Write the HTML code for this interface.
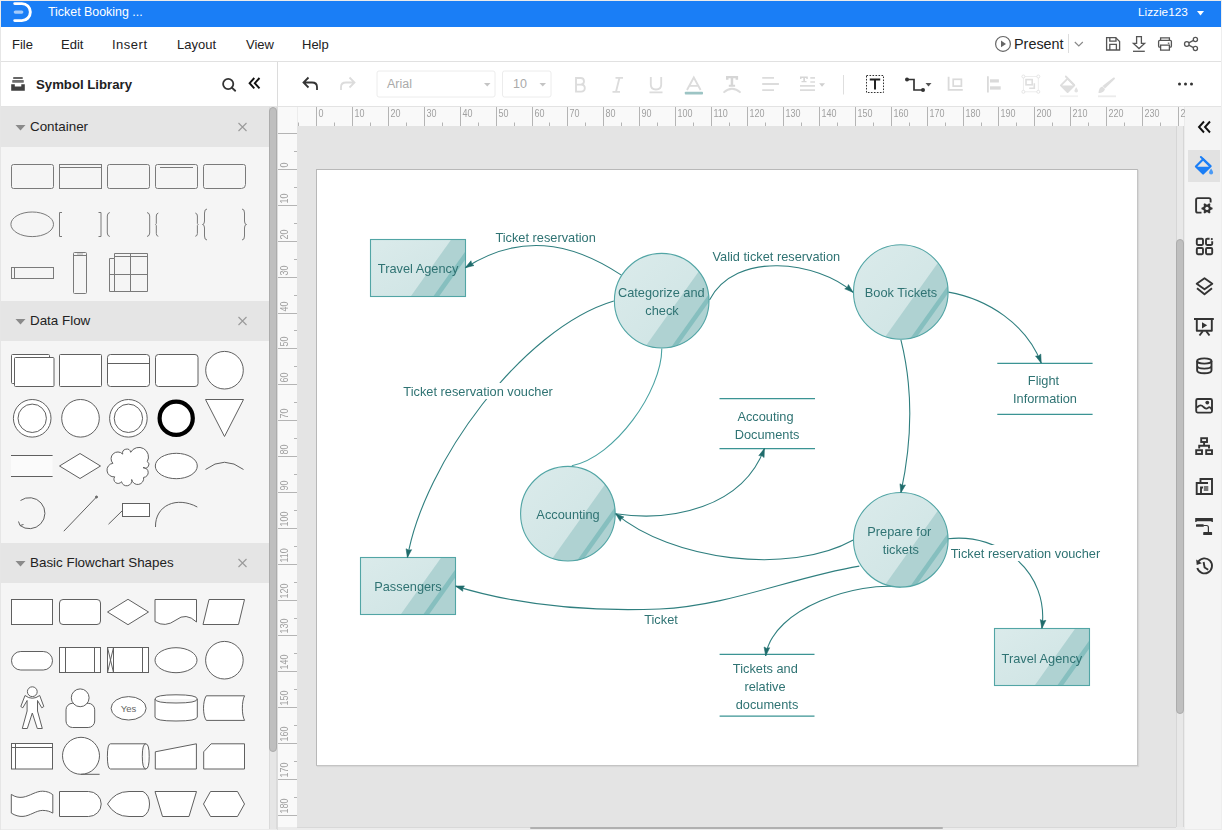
<!DOCTYPE html>
<html><head><meta charset="utf-8"><title>Ticket Booking</title>
<style>
*{margin:0;padding:0;box-sizing:border-box}
html,body{width:1222px;height:830px;overflow:hidden;background:#ebebeb;font-family:"Liberation Sans",sans-serif;position:relative}
.a{position:absolute;white-space:nowrap}
svg{position:absolute;overflow:visible}
#title{left:1px;top:1px;width:1220px;height:26px;background:#1a7ef6;color:#fff}
#menu{left:1px;top:27px;width:1220px;height:35px;background:#fff;border-bottom:1px solid #e1e1e1}
.mi{position:absolute;top:10px;font-size:13px;color:#222;line-height:16px}
#lhead{left:1px;top:62px;width:276px;height:45px;background:#fff;border-bottom:1px solid #e3e3e3}
#divl{left:277px;top:62px;width:1px;height:768px;background:#dcdcdc}
#tool{left:278px;top:62px;width:943px;height:45px;background:#fff;border-bottom:1px solid #e3e3e3}
#lib{left:1px;top:107px;width:268px;height:722px;background:#f5f5f5;overflow:hidden}
.sh{position:absolute;left:0;width:268px;height:40px;background:#e5e5e5}
.sh span{position:absolute;left:29px;top:12px;font-size:13.4px;color:#222;line-height:16px}
#canvas{left:298px;top:127px;width:878px;height:700px;background:#e4e4e4;overflow:hidden}
#rpanel{left:1185px;top:107px;width:36px;height:722px;background:#f4f4f4}
</style></head>
<body>

<div id="title" class="a">
  <svg style="left:11px;top:1px" width="24" height="24" viewBox="0 0 24 24">
    <path d="M2.7 1.6 H9.85 A8.5 8.5 0 0 1 9.85 18.6 H2.7" fill="none" stroke="#fff" stroke-width="2.9" stroke-linecap="round"/>
    <path d="M3.3 10.05 H9.8" stroke="rgba(255,255,255,0.6)" stroke-width="3.2" stroke-linecap="round"/>
  </svg>
  <div class="a" style="left:47px;top:3px;font-size:12.4px;line-height:16px">Ticket Booking ...</div>
  <div class="a" style="left:1137px;top:3px;font-size:11.8px;line-height:16px">Lizzie123</div>
  <svg style="left:1196px;top:10px" width="8" height="5"><path d="M0 0 H7 L3.5 4.5Z" fill="#fff"/></svg>
</div>
<div id="menu" class="a">
  <div class="mi" style="left:11px">File</div>
  <div class="mi" style="left:60px">Edit</div>
  <div class="mi" style="left:111px;letter-spacing:0.5px">Insert</div>
  <div class="mi" style="left:176px">Layout</div>
  <div class="mi" style="left:245px">View</div>
  <div class="mi" style="left:301px">Help</div>
  <svg style="left:993px;top:8px" width="18" height="18" viewBox="0 0 18 18">
    <circle cx="9" cy="8.9" r="7.4" fill="none" stroke="#666" stroke-width="1.2"/>
    <path d="M7 5.6 L12 8.9 L7 12.2Z" fill="#666"/>
  </svg>
  <div class="a" style="left:1013px;top:8px;font-size:14.4px;line-height:18px;color:#222">Present</div>
  <div class="a" style="left:1067px;top:7px;width:1px;height:19px;background:#ddd"></div>
  <svg style="left:1073px;top:14px" width="10" height="7"><path d="M0.8 1 L4.8 5 L8.8 1" fill="none" stroke="#888" stroke-width="1.1"/></svg>
  <svg style="left:-1px;top:-27px" width="1222" height="62" viewBox="0 0 1222 62">
  <g fill="none" stroke="#555" stroke-width="1.3">
    <path d="M1106.6 37.6 H1115.6 L1119.6 41.6 V50 H1106.6Z"/>
    <path d="M1109.8 37.6 V41.2 H1116 V37.6 M1109.8 50 V44.4 H1116.4 V50"/>
    <path d="M1136.6 36.6 H1141.4 V43.4 H1144.6 L1139 48.6 L1133.4 43.4 H1136.6Z" stroke-linejoin="miter"/>
    <path d="M1133 51.3 H1144.8"/>
    <path d="M1160.6 40.2 V37.8 H1169.4 V40.2"/>
    <path d="M1160.6 47.2 H1159.8 Q1158.6 47.2 1158.6 46 V41.6 Q1158.6 40.4 1159.8 40.4 H1170.2 Q1171.4 40.4 1171.4 41.6 V46 Q1171.4 47.2 1170.2 47.2 H1169.4"/>
    <path d="M1160.6 45.2 V50.2 H1169.4 V45.2Z"/>
    <circle cx="1186.8" cy="44" r="2.3"/>
    <circle cx="1195.4" cy="39.5" r="2.1"/>
    <circle cx="1195.4" cy="48.5" r="2.1"/>
    <path d="M1188.8 42.9 L1193.5 40.4 M1188.8 45.1 L1193.5 47.6"/>
  </g>
  <rect x="1167.8" y="42.6" width="1.6" height="1.2" fill="#555"/>
</svg>
</div>
<div id="lhead" class="a">
  <svg style="left:0;top:0" width="30" height="40" viewBox="0 0 30 40">
    <rect x="12.1" y="15.1" width="9.7" height="1.8" rx="0.4" fill="#666"/>
    <rect x="11.2" y="18.1" width="11.6" height="2.6" rx="0.4" fill="#6e6e6e"/>
    <path d="M10.2 22.2 H13.8 V24.5 H20.3 V22.2 H23.8 V28.7 H10.2Z" fill="#404040"/>
  </svg>
  <div class="a" style="left:35px;top:15px;font-size:13.2px;font-weight:bold;color:#222;line-height:16px">Symbol Library</div>
  <svg style="left:220px;top:14px" width="16" height="16" viewBox="0 0 16 16">
    <circle cx="7.2" cy="8" r="5.1" fill="none" stroke="#333" stroke-width="1.8"/>
    <path d="M10.8 11.6 L14.2 14.7" stroke="#333" stroke-width="1.9" stroke-linecap="round"/>
  </svg>
  <svg style="left:247px;top:15px" width="14" height="13" viewBox="0 0 14 13">
    <path d="M6.3 1 L1.6 6.2 L6.3 11.4 M11.5 1 L6.8 6.2 L11.5 11.4" fill="none" stroke="#111" stroke-width="1.9"/>
  </svg>
</div>
<div id="divl" class="a"></div>


<div id="lib" class="a">
  <div class="sh" style="top:0"><span>Container</span></div>
  <div class="sh" style="top:194px"><span>Data Flow</span></div>
  <div class="sh" style="top:436px"><span>Basic Flowchart Shapes</span></div>
</div>
<div class="a" style="left:269px;top:107px;width:8px;height:722px;background:#e6e6e6;border-left:1px solid #dadada;border-right:1px solid #dadada"></div>
<div class="a" style="left:269px;top:107px;width:8px;height:645px;background:#bfbfbf;border:1px solid #acacac;border-radius:4px"></div>
<svg style="left:0;top:0" width="278" height="830" viewBox="0 0 278 830">
<path d="M15.5 125 H25.5 L20.5 130.6Z" fill="#8a8a8a"/><path d="M238.5 123 L246.5 131 M246.5 123 L238.5 131" stroke="#999" stroke-width="1.1"/>
<path d="M15.5 319 H25.5 L20.5 324.6Z" fill="#8a8a8a"/><path d="M238.5 317 L246.5 325 M246.5 317 L238.5 325" stroke="#999" stroke-width="1.1"/>
<path d="M15.5 561 H25.5 L20.5 566.6Z" fill="#8a8a8a"/><path d="M238.5 559 L246.5 567 M246.5 559 L238.5 567" stroke="#999" stroke-width="1.1"/>
<g fill="none" stroke="#7a7a7a" stroke-width="1">
<rect x="11.5" y="164.5" width="42" height="24" rx="2"/>
<rect x="59.5" y="164.5" width="42" height="24"/><path d="M59.5 167.5 H101.5"/>
<rect x="107.5" y="164.5" width="42" height="24" rx="2"/>
<rect x="155.5" y="164.5" width="42" height="24" rx="2"/><path d="M160 167.5 H193"/>
<path d="M205.5 164.5 H243.5 Q245.5 164.5 245.5 166.5 V184.5 Q245.5 188.5 241.5 188.5 H205.5 Q203.5 188.5 203.5 186.5 V166.5 Q203.5 164.5 205.5 164.5Z"/>
<ellipse cx="32.2" cy="224.3" rx="21.3" ry="12.3"/>
<path d="M62 212.5 H59.5 V236.5 H62 M98.5 212.5 H101 V236.5 H98.5"/>
<path d="M109.8 212.5 Q107.3 213 107.3 216 V233 Q107.3 236 109.8 236.5 M147 212.5 Q149.7 213 149.7 216 V233 Q149.7 236 147 236.5"/>
<path d="M158.3 213 Q156.3 213.5 156.3 216 V223.5 L155.6 224.5 L156.3 225.5 V233.5 Q156.3 236 158.3 236.3 M195.3 213 Q197.4 213.5 197.4 216 V223.5 L198.1 224.5 L197.4 225.5 V233.5 Q197.4 236 195.3 236.3"/>
<path d="M207 209 Q204.5 209 204.5 213 V221 Q204.5 224.5 202.5 224.5 Q204.5 224.5 204.5 228 V236 Q204.5 240 207 240"/>
<path d="M242 209 Q244.5 209 244.5 213 V221 Q244.5 224.5 246.5 224.5 Q244.5 224.5 244.5 228 V236 Q244.5 240 242 240"/>
<rect x="11.5" y="267.5" width="42" height="11"/><path d="M14.5 267.5 V278.5"/>
<rect x="73.5" y="252.5" width="13" height="41" rx="1"/><path d="M73.5 255.5 H86.5"/><path d="M77 254 H83" stroke-width="0.6"/>
<path d="M109.5 258.5 H114.5 V253.5 H147.5 V291.5 H109.5Z M114.5 258.5 V291.5 M109.5 291.5 M114.5 256.5 H147.5 M130.5 253.5 V291.5 M109.5 274.5 H147.5"/>
</g>
<g fill="#fff" stroke="#606060" stroke-width="1">
<rect x="11.5" y="354.5" width="38" height="29" rx="1"/>
<rect x="14.5" y="357.5" width="39.5" height="29" rx="1"/>
<rect x="59.5" y="354.5" width="42" height="32" rx="1"/>
<rect x="107.5" y="354.5" width="42" height="32" rx="3"/><path d="M107.5 363.5 H149.5"/>
<rect x="155.5" y="354.5" width="42.5" height="32" rx="3"/>
<circle cx="224.5" cy="370.2" r="18.8"/>
<circle cx="32.2" cy="418.3" r="18.8"/><circle cx="32.2" cy="418.3" r="14.2"/>
<circle cx="80.5" cy="418.3" r="18.8"/>
<circle cx="128.4" cy="418.3" r="18.8"/><circle cx="128.4" cy="418.3" r="14.2"/>
<circle cx="176.2" cy="418.3" r="16.6" stroke="#000" stroke-width="4.2"/>
<path d="M205.5 399.5 H243.5 L224.5 436.5Z"/>
<path d="M11 455.5 H52.6 M11 476.5 H52.6" fill="none"/>
<rect x="11" y="456" width="41.6" height="20" fill="#fbfbfb" stroke="none"/>
<path d="M59.5 466 L80 453.5 L100.5 466 L80 478.5Z"/>
<path d="M112.9 463.3 A1 1 0 0 1 122.7 454.1 A1 1 0 0 1 130.7 452.3 A1 1 0 0 1 147.3 461.5 A1 1 0 0 1 143.0 467.6 A1 1 0 0 1 143.6 477.4 A1 1 0 0 1 131.7 479.5 A1 1 0 0 1 121.5 481.7 A1 1 0 0 1 114.7 476.8 A1 1 0 0 1 112.9 463.3Z"/>
<ellipse cx="176.3" cy="466" rx="21" ry="12.7"/>
<path d="M205.5 469.5 Q224.5 455 243.5 469.5" fill="none"/>
<path d="M20.5 500.5 A15.5 15.5 0 1 1 20 525.5 M18.5 521.5 L20 525.5 L23.5 524.5" fill="none"/>
<path d="M63.8 531.2 L96.5 497" fill="none"/><circle cx="96.5" cy="497" r="1" fill="#7a7a7a"/>
<path d="M108.5 524.2 L122.5 510.5" fill="none"/><rect x="122.5" y="503.5" width="27" height="13"/>
<path d="M155.5 527 C155 505 177 496 197.3 507" fill="none"/>
</g>
<g fill="#fff" stroke="#606060" stroke-width="1">
<rect x="11.5" y="599.5" width="41" height="25"/>
<rect x="59.5" y="599.5" width="41" height="25" rx="3.5"/>
<path d="M107.5 612 L128 599.3 L148.5 612 L128 624.7Z"/>
<path d="M155 599.5 H196.5 V622 Q186 612 176 620 Q165 628 155 621.5Z"/>
<path d="M209 599.5 H244.5 L238.5 624.5 H203Z"/>
<rect x="11.5" y="651.5" width="41" height="18.5" rx="9.25"/>
<rect x="59.5" y="647.5" width="41" height="25"/><path d="M65.5 647.5 V672.5 M94.5 647.5 V672.5"/>
<rect x="107.5" y="647.5" width="41" height="25"/><path d="M113.5 647.5 V672.5 M142.5 647.5 V672.5 M107.5 647.5 L113.5 672.5 M113.5 647.5 L107.5 672.5"/>
<ellipse cx="176" cy="660.2" rx="21" ry="12.5"/>
<circle cx="224.4" cy="660.2" r="18.8"/>
<path d="M25 695.5 Q32.3 701 39.7 695.5 L43.8 706.5 L41.8 707.8 L37.5 700.5 V711 L42.3 728.5 H37.3 L32.3 713 L27.3 728.5 H22.3 L27.1 711 V700.5 L22.8 707.8 L20.8 706.5 Z"/>
<circle cx="32.3" cy="691.7" r="4.9"/>
<rect x="66" y="703.3" width="28.7" height="24.2" rx="6.5"/>
<circle cx="80.2" cy="697.8" r="8.9"/>
<ellipse cx="128.6" cy="708.3" rx="17.5" ry="11.7"/>
<path d="M155 699 Q155 694.8 176 694.8 Q197.3 694.8 197.3 699 V717 Q197.3 721 176 721 Q155 721 155 717Z M155 699 Q155 703 176 703 Q197.3 703 197.3 699"/>
<path d="M206.3 695.8 H244.6 C241.6 701 241.6 715.5 244.6 720.4 H206.3 C202.6 715.5 202.6 701 206.3 695.8Z"/>
<rect x="11.5" y="743.5" width="41" height="25.5"/><path d="M15.5 743.5 V769 M11.5 747.5 H52.5"/>
<circle cx="81" cy="755.8" r="18.5"/><path d="M81 774.3 H99.6" fill="none"/>
<path d="M110.5 743.8 H145.8 Q149.2 743.8 149.2 756.3 Q149.2 769 145.8 769 H110.5 Q107.4 769 107.4 756.3 Q107.4 743.8 110.5 743.8Z M145.8 743.8 Q142.3 743.8 142.3 756.3 Q142.3 769 145.8 769"/>
<path d="M155.3 751.8 L196.4 743.8 V769 H155.3Z"/>
<path d="M211.1 743.8 H244.5 V769 H203.7 V751.8Z"/>
<path d="M11.3 794.4 C15 797 19 797.8 23 797.2 C30 796 36 791 42.7 791.2 C47 791.3 50 792.5 52.8 794.7 V813.1 C50 811.5 47 810.4 42.7 810.4 C36 810.4 30 816 23 816.4 C19 816.7 15 815.5 11.3 813.1Z"/>
<path d="M59.5 791.5 H88.5 A12.7 12.5 0 0 1 88.5 816.5 H59.5Z"/>
<path d="M107.5 804 Q115 791.5 129 791.5 H143 Q149.5 795 149.5 804 Q149.5 813 143 816.5 H129 Q115 816.5 107.5 804Z"/>
<path d="M155 791.5 H196.5 L189 816.5 H162.5Z"/>
<path d="M203.5 804 L210.5 791.5 H237.5 L244.5 804 L237.5 816.5 H210.5Z"/>
</g>
<text x="128.5" y="711.8" font-size="9.5" fill="#666" text-anchor="middle" font-family="Liberation Sans">Yes</text>
</svg>


<div id="tool" class="a"></div>
<svg style="left:0;top:0" width="1222" height="110" viewBox="0 0 1222 110">
<path d="M308.5 77.5 L303.5 82.5 L308.5 87.5 M304 82.5 H312 Q317 82.5 317 87 V90" fill="none" stroke="#333" stroke-width="1.8" stroke-linejoin="miter"/>
<path d="M349.5 77.5 L354.5 82.5 L349.5 87.5 M354 82.5 H346 Q341 82.5 341 87 V90" fill="none" stroke="#dcdcdc" stroke-width="1.8"/>
<rect x="377" y="71" width="118" height="26" rx="2" fill="#fff" stroke="#ececec"/>
<rect x="502.5" y="71" width="48.5" height="26" rx="2" fill="#fff" stroke="#ececec"/>
<path d="M484 83 H490.5 L487.25 86.5Z" fill="#c4c4c4"/>
<path d="M539.5 83 H546 L542.75 86.5Z" fill="#c4c4c4"/>
<g fill="none" stroke="#dcdcdc" stroke-width="1.85">
<path d="M576 78 H580.6 Q584 78 584 81.3 Q584 84.6 580.6 84.6 H576 M576 84.6 H581 Q584.8 84.6 584.8 88.1 Q584.8 91.6 581 91.6 H576 Z M576 77.1 V92.5"/>
<path d="M615.5 77.8 H623 M612.5 91.8 H620 M619.5 77.8 L616 91.8"/>
<path d="M650.8 77 V84.5 Q650.8 89.5 656 89.5 Q661.2 89.5 661.2 84.5 V77 M649.5 92.3 H662.5"/>
<path d="M687 90 L693.8 77.5 L700.6 90 M689.3 85.8 H698.3"/>
<path d="M723.5 92.6 Q732 85 740.6 92.6"/>
<path d="M762.2 77.9 H774 M762.2 84 H778.9 M762.2 90.1 H774" stroke-width="1.9"/>
<path d="M810.3 77.9 H815 M810.3 82 H815 M800 85.9 H815 M800 90.1 H815" stroke-width="1.7"/>
</g>
<g fill="#d6d6d6">
<path d="M726 76.1 H738.1 V79.8 H735.6 V78.3 H733.2 V84.7 H735.1 V86.7 H728.8 V84.7 H730.7 V78.3 H728.5 V79.8 H726Z"/>
<path d="M800 76.4 H807.8 V79 H806.3 V78 H805 V80.9 H806.5 V82.3 H801.5 V80.9 H803.3 V78 H801.5 V79 H800Z"/>
</g>
<rect x="684.8" y="91.8" width="18.2" height="2.7" rx="0.8" fill="#9cc4c4"/>
<path d="M819.1 83.3 H825 L822.05 86.7Z" fill="#cfcfcf"/>
<path d="M843.5 75 V94.5" stroke="#dedede" stroke-width="1"/>
<rect x="866.5" y="75.5" width="17" height="17" fill="none" stroke="#333" stroke-width="1" stroke-dasharray="1.6 1.4"/>
<path d="M869.8 79.5 H880.2 M875 79.5 V89.5" stroke="#222" stroke-width="2"/>
<circle cx="907" cy="79.5" r="2" fill="#333"/>
<circle cx="923" cy="90" r="2" fill="#333"/>
<path d="M907 79.5 H914 V90 H923" fill="none" stroke="#333" stroke-width="1.7"/>
<path d="M925.5 83 H931.5 L928.5 86.5Z" fill="#555"/>
<g fill="none" stroke="#dadada" stroke-width="1.8">
<path d="M948.6 76.8 V89.8 H962.8"/><rect x="953.2" y="79.3" width="8.2" height="6.8" stroke-width="1.7"/>
<path d="M987.9 76.3 V92.5"/>
</g>
<rect x="990" y="79.3" width="8.9" height="3.2" fill="#dadada"/><rect x="990" y="86.3" width="10.7" height="3.3" fill="#dadada"/>
<rect x="1023.4" y="76.5" width="14.9" height="15.3" fill="none" stroke="#ececec" stroke-width="0.9"/>
<g fill="none" stroke="#dedede" stroke-width="1.6">
<rect x="1026" y="79.6" width="6.2" height="5.2"/>
<path d="M1034.3 83.2 V88.3 H1029.2"/>
</g>
<g fill="#fff" stroke="#e2e2e2" stroke-width="0.9">
<circle cx="1023.4" cy="76.5" r="1.5"/><circle cx="1038.3" cy="76.5" r="1.5"/><circle cx="1023.4" cy="91.8" r="1.5"/><circle cx="1038.3" cy="91.8" r="1.5"/>
</g>
<path d="M1065.8 76.5 L1074.2 85" stroke="#dedede" stroke-width="1.8" stroke-linecap="round"/>
<path d="M1067.6 78.6 L1074.3 85.3 L1067.6 92 L1060.9 85.3Z" fill="none" stroke="#dedede" stroke-width="1.9" stroke-linejoin="round"/>
<path d="M1061.3 85.6 H1074 L1067.6 92Z" fill="#dedede"/>
<path d="M1076.2 87.2 Q1078 89.6 1078 90.8 A1.8 1.8 0 0 1 1074.4 90.8 Q1074.4 89.6 1076.2 87.2Z" fill="#e2e2e2"/>
<path d="M1060 96.2 H1078" stroke="#f2f2f2" stroke-width="1.8"/>
<path d="M1113.5 77.5 Q1115.5 77 1114.8 79 L1105 88.5 L1102.5 86 Z" fill="#dedede"/>
<path d="M1102.3 86.4 L1105 89.1 Q1104 92.6 1100 93 L1098.5 93 Q1098.6 90.4 1099.6 88.4 Q1100.6 86.9 1102.3 86.4Z" fill="#dedede"/>
<path d="M1098 96.3 H1116" stroke="#ebebeb" stroke-width="1.8"/>
<circle cx="1179.5" cy="84" r="1.5" fill="#333"/><circle cx="1185.5" cy="84" r="1.5" fill="#333"/><circle cx="1191.5" cy="84" r="1.5" fill="#333"/>
</svg>
<div class="a" style="left:387px;top:76px;font-size:12.5px;line-height:16px;color:#aaa">Arial</div>
<div class="a" style="left:513px;top:76px;font-size:12.5px;line-height:16px;color:#aaa">10</div>

<div class="a" style="left:278px;top:107px;width:906px;height:19px;background:#f9f9f9"></div>
<div class="a" style="left:278px;top:126px;width:19px;height:701px;background:#f9f9f9"></div>
<svg style="left:0;top:0;will-change:transform" width="1222" height="830" viewBox="0 0 1222 830">
<g stroke="#b4b4b4" stroke-width="1" fill="none">
<path d="M298.5 122.5 V126"/>
<path d="M316.5 107 V126"/>
<path d="M334.5 122.5 V126"/>
<path d="M352.5 107 V126"/>
<path d="M370.5 122.5 V126"/>
<path d="M388.5 107 V126"/>
<path d="M406.5 122.5 V126"/>
<path d="M424.5 107 V126"/>
<path d="M442.5 122.5 V126"/>
<path d="M460.5 107 V126"/>
<path d="M478.5 122.5 V126"/>
<path d="M496.5 107 V126"/>
<path d="M514.5 122.5 V126"/>
<path d="M532.5 107 V126"/>
<path d="M549.5 122.5 V126"/>
<path d="M567.5 107 V126"/>
<path d="M585.5 122.5 V126"/>
<path d="M603.5 107 V126"/>
<path d="M621.5 122.5 V126"/>
<path d="M639.5 107 V126"/>
<path d="M657.5 122.5 V126"/>
<path d="M675.5 107 V126"/>
<path d="M693.5 122.5 V126"/>
<path d="M711.5 107 V126"/>
<path d="M729.5 122.5 V126"/>
<path d="M747.5 107 V126"/>
<path d="M765.5 122.5 V126"/>
<path d="M783.5 107 V126"/>
<path d="M801.5 122.5 V126"/>
<path d="M819.5 107 V126"/>
<path d="M837.5 122.5 V126"/>
<path d="M855.5 107 V126"/>
<path d="M873.5 122.5 V126"/>
<path d="M891.5 107 V126"/>
<path d="M909.5 122.5 V126"/>
<path d="M927.5 107 V126"/>
<path d="M945.5 122.5 V126"/>
<path d="M963.5 107 V126"/>
<path d="M981.5 122.5 V126"/>
<path d="M998.5 107 V126"/>
<path d="M1016.5 122.5 V126"/>
<path d="M1034.5 107 V126"/>
<path d="M1052.5 122.5 V126"/>
<path d="M1070.5 107 V126"/>
<path d="M1088.5 122.5 V126"/>
<path d="M1106.5 107 V126"/>
<path d="M1124.5 122.5 V126"/>
<path d="M1142.5 107 V126"/>
<path d="M1160.5 122.5 V126"/>
<path d="M1178.5 107 V126"/>
<path d="M278 133.5 H297"/>
<path d="M294 151.5 H297"/>
<path d="M278 169.5 H297"/>
<path d="M294 187.5 H297"/>
<path d="M278 205.5 H297"/>
<path d="M294 223.5 H297"/>
<path d="M278 241.5 H297"/>
<path d="M294 259.5 H297"/>
<path d="M278 277.5 H297"/>
<path d="M294 295.5 H297"/>
<path d="M278 313.5 H297"/>
<path d="M294 330.5 H297"/>
<path d="M278 348.5 H297"/>
<path d="M294 366.5 H297"/>
<path d="M278 384.5 H297"/>
<path d="M294 402.5 H297"/>
<path d="M278 420.5 H297"/>
<path d="M294 438.5 H297"/>
<path d="M278 456.5 H297"/>
<path d="M294 474.5 H297"/>
<path d="M278 492.5 H297"/>
<path d="M294 510.5 H297"/>
<path d="M278 528.5 H297"/>
<path d="M294 546.5 H297"/>
<path d="M278 564.5 H297"/>
<path d="M294 582.5 H297"/>
<path d="M278 600.5 H297"/>
<path d="M294 618.5 H297"/>
<path d="M278 635.5 H297"/>
<path d="M294 653.5 H297"/>
<path d="M278 671.5 H297"/>
<path d="M294 689.5 H297"/>
<path d="M278 707.5 H297"/>
<path d="M294 725.5 H297"/>
<path d="M278 743.5 H297"/>
<path d="M294 761.5 H297"/>
<path d="M278 779.5 H297"/>
<path d="M294 797.5 H297"/>
<path d="M278 815.5 H297"/>
<path d="M297.5 107 V126" stroke="#ececec"/>
</g>
<g fill="#a0a0a0" font-size="10.2" font-family="Liberation Sans">
<text transform="translate(318.5 117) scale(0.88 1)">0</text>
<text transform="translate(354.5 117) scale(0.88 1)">10</text>
<text transform="translate(390.5 117) scale(0.88 1)">20</text>
<text transform="translate(426.5 117) scale(0.88 1)">30</text>
<text transform="translate(462.5 117) scale(0.88 1)">40</text>
<text transform="translate(498.5 117) scale(0.88 1)">50</text>
<text transform="translate(534.5 117) scale(0.88 1)">60</text>
<text transform="translate(569.5 117) scale(0.88 1)">70</text>
<text transform="translate(605.5 117) scale(0.88 1)">80</text>
<text transform="translate(641.5 117) scale(0.88 1)">90</text>
<text transform="translate(677.5 117) scale(0.88 1)">100</text>
<text transform="translate(713.5 117) scale(0.88 1)">110</text>
<text transform="translate(749.5 117) scale(0.88 1)">120</text>
<text transform="translate(785.5 117) scale(0.88 1)">130</text>
<text transform="translate(821.5 117) scale(0.88 1)">140</text>
<text transform="translate(857.5 117) scale(0.88 1)">150</text>
<text transform="translate(893.5 117) scale(0.88 1)">160</text>
<text transform="translate(929.5 117) scale(0.88 1)">170</text>
<text transform="translate(965.5 117) scale(0.88 1)">180</text>
<text transform="translate(1000.5 117) scale(0.88 1)">190</text>
<text transform="translate(1036.5 117) scale(0.88 1)">200</text>
<text transform="translate(1072.5 117) scale(0.88 1)">210</text>
<text transform="translate(1108.5 117) scale(0.88 1)">220</text>
<text transform="translate(1144.5 117) scale(0.88 1)">230</text>
<text transform="translate(1180.5 117) scale(0.88 1)">240</text>
<text transform="translate(288 167.5) rotate(-90) scale(0.88 1)">0</text>
<text transform="translate(288 203.5) rotate(-90) scale(0.88 1)">10</text>
<text transform="translate(288 239.5) rotate(-90) scale(0.88 1)">20</text>
<text transform="translate(288 275.5) rotate(-90) scale(0.88 1)">30</text>
<text transform="translate(288 311.5) rotate(-90) scale(0.88 1)">40</text>
<text transform="translate(288 346.5) rotate(-90) scale(0.88 1)">50</text>
<text transform="translate(288 382.5) rotate(-90) scale(0.88 1)">60</text>
<text transform="translate(288 418.5) rotate(-90) scale(0.88 1)">70</text>
<text transform="translate(288 454.5) rotate(-90) scale(0.88 1)">80</text>
<text transform="translate(288 490.5) rotate(-90) scale(0.88 1)">90</text>
<text transform="translate(288 526.5) rotate(-90) scale(0.88 1)">100</text>
<text transform="translate(288 562.5) rotate(-90) scale(0.88 1)">110</text>
<text transform="translate(288 598.5) rotate(-90) scale(0.88 1)">120</text>
<text transform="translate(288 633.5) rotate(-90) scale(0.88 1)">130</text>
<text transform="translate(288 669.5) rotate(-90) scale(0.88 1)">140</text>
<text transform="translate(288 705.5) rotate(-90) scale(0.88 1)">150</text>
<text transform="translate(288 741.5) rotate(-90) scale(0.88 1)">160</text>
<text transform="translate(288 777.5) rotate(-90) scale(0.88 1)">170</text>
<text transform="translate(288 813.5) rotate(-90) scale(0.88 1)">180</text>
</g>
</svg>

<div class="a" style="left:297px;top:126px;width:879px;height:701px;background:#e4e4e4"></div>
<div class="a" style="left:316px;top:169px;width:822px;height:597px;background:#fff;border:1px solid #b8b8b8;border-right-color:#c4c4c4;border-bottom-color:#c4c4c4;box-shadow:1px 1px 1px rgba(0,0,0,0.06)"></div>
<div class="a" style="left:1176px;top:126px;width:8px;height:701px;background:#e8e8e8;border-left:1px solid #d6d6d6;border-right:1px solid #d6d6d6"></div>
<div class="a" style="left:1176px;top:239px;width:8px;height:475px;background:#bfbfbf;border:1px solid #acacac;border-radius:4px"></div>
<div class="a" style="left:297px;top:827px;width:879px;height:3px;background:#ececec;border-top:1px solid #d8d8d8"></div>
<div class="a" style="left:530px;top:827px;width:413px;height:2px;background:#b0b0b0;border-radius:1px"></div>

<svg style="left:0;top:0;will-change:transform" width="1222" height="830" viewBox="0 0 1222 830">
<defs><linearGradient id="gbase" x1="0" y1="0" x2="1" y2="1"><stop offset="0" stop-color="#dbebeb"/><stop offset="1" stop-color="#cde3e3"/></linearGradient></defs>
<g fill="none" stroke="#2f7f7f" stroke-width="1.1">
<path d="M621.4 275.1 C569.4 240.7 519.2 233.6 465.3 267.7"/>
<path d="M709.5 300.0 C735.7 250.1 817.2 261.1 853.0 292.3"/>
<path d="M948.4 292.1 C988.0 299.0 1026.4 324.3 1041.2 363.0"/>
<path d="M900.9 339.8 C913.4 389.8 911.8 442.6 900.9 492.7"/>
<path d="M613.8 301.0 C522.0 328.3 423.4 464.2 407.4 557.6"/>
<path d="M661.8 348.4 C661.7 391.2 614.8 457.3 571.8 465.7" stroke="#4aa2a2"/>
<path d="M615.6 513.7 C671.1 522.1 742.3 507.9 764.4 448.6"/>
<path d="M853.3 540.0 C788.6 576.0 670.3 559.8 615.6 513.7"/>
<path d="M859.3 566.1 C791.8 577.3 729.2 605.9 659.7 609.0 C590.1 611.7 522.4 606.7 455.5 586.1"/>
<path d="M900.6 587.0 C859.1 581.4 772.5 607.2 765.7 655.8"/>
<path d="M947.9 538.8 C1001.0 532.5 1049.6 573.0 1041.9 628.4"/>
</g>
<rect x="402" y="383" width="152" height="16" fill="#fff"/>
<rect x="950" y="545" width="151" height="16" fill="#fff"/>
<clipPath id="c1"><rect x="370.5" y="239.5" width="95" height="57"/></clipPath><g clip-path="url(#c1)"><rect x="369.5" y="238.5" width="97.0" height="59.0" fill="url(#gbase)"/><polygon points="542.6,111.1 310.6,437.1 473.6,553.1 705.6,227.1" fill="#afd2d2"/><polygon points="557.6,121.8 325.6,447.8 329.4,450.5 561.4,124.5" fill="#86bfbf"/></g><rect x="370.5" y="239.5" width="95" height="57" fill="none" stroke="#52a5a5" stroke-width="1.1"/>
<clipPath id="c2"><rect x="360.5" y="557.5" width="95" height="57"/></clipPath><g clip-path="url(#c2)"><rect x="359.5" y="556.5" width="97.0" height="59.0" fill="url(#gbase)"/><polygon points="532.6,429.1 300.6,755.1 463.6,871.1 695.6,545.1" fill="#afd2d2"/><polygon points="547.6,439.8 315.6,765.8 319.4,768.5 551.4,442.5" fill="#86bfbf"/></g><rect x="360.5" y="557.5" width="95" height="57" fill="none" stroke="#52a5a5" stroke-width="1.1"/>
<clipPath id="c3"><rect x="994.5" y="628.5" width="95" height="57"/></clipPath><g clip-path="url(#c3)"><rect x="993.5" y="627.5" width="97.0" height="59.0" fill="url(#gbase)"/><polygon points="1166.6,500.1 934.6,826.1 1097.6,942.1 1329.6,616.1" fill="#afd2d2"/><polygon points="1181.6,510.8 949.6,836.8 953.4,839.5 1185.4,513.5" fill="#86bfbf"/></g><rect x="994.5" y="628.5" width="95" height="57" fill="none" stroke="#52a5a5" stroke-width="1.1"/>
<clipPath id="c4"><circle cx="661.7" cy="300.7" r="47.3"/></clipPath><g clip-path="url(#c4)"><rect x="613.4000000000001" y="252.39999999999998" width="96.59999999999991" height="96.60000000000002" fill="url(#gbase)"/><polygon points="788.5,145.4 556.5,471.4 719.5,587.4 951.5,261.4" fill="#afd2d2"/><polygon points="805.9,157.8 573.9,483.8 577.6,486.4 809.6,160.4" fill="#86bfbf"/></g><circle cx="661.7" cy="300.7" r="47.3" fill="none" stroke="#52a5a5" stroke-width="1.1"/>
<clipPath id="c5"><circle cx="900.8" cy="292.0" r="47.3"/></clipPath><g clip-path="url(#c5)"><rect x="852.5" y="243.7" width="96.59999999999991" height="96.60000000000002" fill="url(#gbase)"/><polygon points="1027.6,136.7 795.6,462.7 958.6,578.7 1190.6,252.7" fill="#afd2d2"/><polygon points="1045.0,149.1 813.0,475.1 816.7,477.7 1048.7,151.7" fill="#86bfbf"/></g><circle cx="900.8" cy="292.0" r="47.3" fill="none" stroke="#52a5a5" stroke-width="1.1"/>
<clipPath id="c6"><circle cx="567.9" cy="513.7" r="47.3"/></clipPath><g clip-path="url(#c6)"><rect x="519.6" y="465.40000000000003" width="96.59999999999991" height="96.59999999999997" fill="url(#gbase)"/><polygon points="694.7,358.4 462.7,684.4 625.7,800.4 857.7,474.4" fill="#afd2d2"/><polygon points="712.1,370.8 480.1,696.8 483.8,699.4 715.8,373.4" fill="#86bfbf"/></g><circle cx="567.9" cy="513.7" r="47.3" fill="none" stroke="#52a5a5" stroke-width="1.1"/>
<clipPath id="c7"><circle cx="900.8" cy="539.8" r="47.3"/></clipPath><g clip-path="url(#c7)"><rect x="852.5" y="491.49999999999994" width="96.59999999999991" height="96.59999999999997" fill="url(#gbase)"/><polygon points="1027.6,384.5 795.6,710.5 958.6,826.5 1190.6,500.5" fill="#afd2d2"/><polygon points="1045.0,396.9 813.0,722.9 816.7,725.5 1048.7,399.5" fill="#86bfbf"/></g><circle cx="900.8" cy="539.8" r="47.3" fill="none" stroke="#52a5a5" stroke-width="1.1"/>
<g stroke="#3b9494" stroke-width="1.2" fill="none">
<path d="M719.5 398.6 H815 M719.5 448.7 H815"/>
<path d="M997.3 363.3 H1092.6 M997.3 414.4 H1092.6"/>
<path d="M719.6 654.3 H814.5 M719.6 716.1 H814.5"/>
</g>
<path d="M465.30 267.70 L470.99 260.79 L471.62 263.70 L473.98 265.52Z" fill="#1f6b6b" stroke="#1f6b6b" stroke-width="0.6" stroke-linejoin="miter"/>
<path d="M853.00 292.30 L844.75 288.83 L847.36 287.39 L848.43 284.60Z" fill="#1f6b6b" stroke="#1f6b6b" stroke-width="0.6" stroke-linejoin="miter"/>
<path d="M1041.20 363.00 L1035.55 356.06 L1038.53 356.01 L1040.78 354.06Z" fill="#1f6b6b" stroke="#1f6b6b" stroke-width="0.6" stroke-linejoin="miter"/>
<path d="M900.90 492.70 L899.97 483.80 L902.49 485.39 L905.44 484.99Z" fill="#1f6b6b" stroke="#1f6b6b" stroke-width="0.6" stroke-linejoin="miter"/>
<path d="M407.40 557.60 L406.08 548.75 L408.66 550.23 L411.59 549.69Z" fill="#1f6b6b" stroke="#1f6b6b" stroke-width="0.6" stroke-linejoin="miter"/>
<path d="M764.40 448.60 L764.06 457.54 L761.79 455.61 L758.81 455.59Z" fill="#1f6b6b" stroke="#1f6b6b" stroke-width="0.6" stroke-linejoin="miter"/>
<path d="M615.60 513.70 L623.90 517.04 L621.32 518.52 L620.30 521.32Z" fill="#1f6b6b" stroke="#1f6b6b" stroke-width="0.6" stroke-linejoin="miter"/>
<path d="M455.50 586.10 L464.45 585.93 L462.65 588.30 L462.80 591.28Z" fill="#1f6b6b" stroke="#1f6b6b" stroke-width="0.6" stroke-linejoin="miter"/>
<path d="M765.70 655.80 L764.10 646.99 L766.74 648.39 L769.65 647.77Z" fill="#1f6b6b" stroke="#1f6b6b" stroke-width="0.6" stroke-linejoin="miter"/>
<path d="M1041.90 628.40 L1040.30 619.60 L1042.93 620.99 L1045.84 620.37Z" fill="#1f6b6b" stroke="#1f6b6b" stroke-width="0.6" stroke-linejoin="miter"/>
<g fill="#2f7373" font-size="12.8" font-family="Liberation Sans" text-anchor="middle">
<text transform="translate(545.6 242.0) scale(1 1.04)">Ticket reservation</text>
<text transform="translate(776.3 260.8) scale(1 1.04)">Valid ticket reservation</text>
<text transform="translate(478.1 396.3) scale(1 1.04)">Ticket reservation voucher</text>
<text transform="translate(1025.5 558.0) scale(1 1.04)">Ticket reservation voucher</text>
<text transform="translate(661 624.0) scale(1 1.04)">Ticket</text>
<text transform="translate(418.1 272.9) scale(1 1.04)">Travel Agency</text>
<text transform="translate(408 591.1) scale(1 1.04)">Passengers</text>
<text transform="translate(1041.9 663.2) scale(1 1.04)">Travel Agency</text>
<text transform="translate(661.3 296.9) scale(1 1.04)">Categorize and</text>
<text transform="translate(662 314.6) scale(1 1.04)">check</text>
<text transform="translate(901 296.7) scale(1 1.04)">Book Tickets</text>
<text transform="translate(568 519.1) scale(1 1.04)">Accounting</text>
<text transform="translate(899.3 535.9) scale(1 1.04)">Prepare for</text>
<text transform="translate(900.8 553.8) scale(1 1.04)">tickets</text>
<text transform="translate(1043.5 384.6) scale(1 1.04)">Flight</text>
<text transform="translate(1045 402.8) scale(1 1.04)">Information</text>
<text transform="translate(765.5 420.7) scale(1 1.04)">Accouting</text>
<text transform="translate(767.1 438.8) scale(1 1.04)">Documents</text>
<text transform="translate(765.3 673.0) scale(1 1.04)">Tickets and</text>
<text transform="translate(765 690.8) scale(1 1.04)">relative</text>
<text transform="translate(767 709.0) scale(1 1.04)">documents</text>
</g></svg>

<div id="rpanel" class="a"></div>
<div class="a" style="left:1221px;top:0;width:1px;height:830px;background:#eeeeee"></div>
<div class="a" style="left:0;top:27px;width:1px;height:803px;background:#e6e6e6"></div>
<div class="a" style="left:1188px;top:150px;width:32px;height:32px;background:#e2e2e2"></div>
<svg style="left:0;top:0" width="1222" height="830" viewBox="0 0 1222 830">
<path d="M1204 121.5 L1199 127 L1204 132.5 M1210 121.5 L1205 127 L1210 132.5" fill="none" stroke="#111" stroke-width="1.9"/>
<path d="M1200.9 157 L1210.6 166" stroke="#1a7ef6" stroke-width="2" stroke-linecap="round"/>
<path d="M1203.1 159.2 L1210.3 166.4 L1203.1 173.6 L1195.9 166.4Z" fill="none" stroke="#1a7ef6" stroke-width="2.1" stroke-linejoin="round"/>
<path d="M1196.3 166.8 H1210 L1203.1 173.6Z" fill="#1a7ef6"/>
<path d="M1211.1 168.6 Q1213.1 171.3 1213.1 172.6 A2 2 0 0 1 1209.1 172.6 Q1209.1 171.3 1211.1 168.6Z" fill="#4a9af5"/>
<g fill="none" stroke="#333" stroke-width="1.9" stroke-linejoin="round">
<path d="M1201.5 212.6 H1197.8 Q1196.1 212.6 1196.1 210.9 V199.8 Q1196.1 198.1 1197.8 198.1 H1208.9 Q1210.6 198.1 1210.6 199.8 V202.5"/>
<rect x="1196.8" y="238.8" width="6.2" height="6.2" rx="1.2"/><rect x="1196.8" y="248" width="6.2" height="6.2" rx="1.2"/><rect x="1206" y="248" width="6.2" height="6.2" rx="1.2"/>
<path d="M1209.6 238.8 H1207.2 Q1206 238.8 1206 240 V243.8 Q1206 245 1207.2 245 H1211 Q1212.2 245 1212.2 243.8 V241.3"/>
<path d="M1204.5 278.3 L1212.3 283.8 L1204.5 289.3 L1196.7 283.8Z"/>
<path d="M1197 288.2 L1204.5 294.2 L1212 288.2"/>
<path d="M1199.5 335.5 L1202.8 331.2 M1209.5 335.5 L1206.2 331.2"/>
<path d="M1196.8 319 V330.8 H1211.8 V319"/>
<ellipse cx="1204.3" cy="361" rx="7.2" ry="2.6"/>
<path d="M1197.1 361 V370.3 Q1197.1 373.3 1204.3 373.3 Q1211.5 373.3 1211.5 370.3 V361 M1197.1 365.8 Q1197.1 368.6 1204.3 368.6 Q1211.5 368.6 1211.5 365.8"/>
<rect x="1196.2" y="399" width="15.8" height="13.6" rx="1.5"/>
<path d="M1197 407.5 Q1200.5 403.5 1203.5 407 Q1206.5 410 1208.5 407.5 Q1210 406.5 1211.8 409.5"/>
</g>
<rect x="1194" y="318" width="19.8" height="2" fill="#333"/>
<circle cx="1207.3" cy="402.6" r="1.9" fill="#333"/><circle cx="1211.8" cy="239.1" r="1.1" fill="#333"/>
<path d="M1202 322.2 L1207.2 325.3 L1202 328.4Z" fill="#333"/>
<polygon points="1212.55,207.67 1212.55,209.13 1210.60,209.89 1210.09,210.77 1210.41,212.84 1209.14,213.57 1207.51,212.27 1206.49,212.27 1204.86,213.57 1203.59,212.84 1203.91,210.77 1203.40,209.89 1201.45,209.13 1201.45,207.67 1203.40,206.91 1203.91,206.03 1203.59,203.96 1204.86,203.23 1206.49,204.53 1207.51,204.53 1209.14,203.23 1210.41,203.96 1210.09,206.03 1210.60,206.91" fill="#333"/><circle cx="1207" cy="208.4" r="1.7" fill="#f4f4f4"/>
<g fill="none" stroke="#333" stroke-width="1.9">
<rect x="1201.2" y="438.2" width="5.8" height="3.8"/>
<path d="M1204.1 442 V445.8 M1199.2 448.5 V445.8 H1209 V448.5"/>
<rect x="1196.2" y="450.2" width="5.8" height="3.8"/><rect x="1206.2" y="450.2" width="5.8" height="3.8"/>
<path d="M1200.5 482.5 V479 H1212 V494 H1196.7 V483 H1208"/>
<path d="M1201 494 V487.5 H1203"/>
</g>
<rect x="1203.8" y="486" width="4.5" height="5" fill="#777"/>
<g fill="#333">
<path d="M1195.2 518 H1212.9 V522 H1211.5 V521.3 H1196.6 V522 H1195.2Z"/>
<rect x="1196" y="524.3" width="7.8" height="2.5" rx="0.6"/>
<rect x="1203.2" y="532.1" width="8.9" height="2.9" rx="0.6"/>
</g>
<path d="M1203.5 525.5 H1206.5 Q1208.4 525.5 1208.4 527.5 V532.5" fill="none" stroke="#333" stroke-width="1.2"/>
<g fill="none" stroke="#333" stroke-width="1.9">
<path d="M1197.3 568 A7.5 7.5 0 1 0 1198.2 561.8"/>
<path d="M1203.6 562 L1204.6 567.5 L1208.2 569.8"/>
</g>
<path d="M1196.2 559.5 L1196.7 565 L1201.8 563.3Z" fill="#333"/>
</svg>

</body></html>
